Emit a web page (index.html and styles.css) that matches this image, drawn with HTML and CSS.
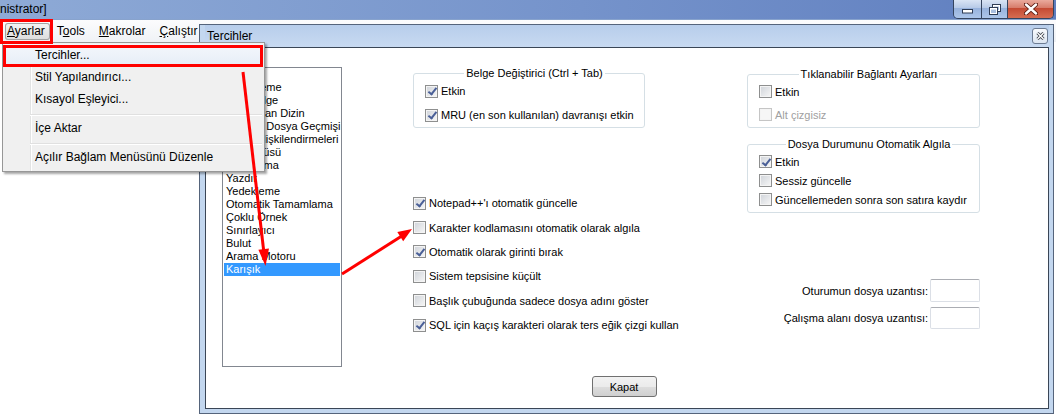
FILE: index.html
```html
<!DOCTYPE html>
<html lang="tr">
<head>
  <meta charset="UTF-8" />
  <title>Tercihler</title>
  <link rel="stylesheet" href="styles.css">
</head>
<body>
<div class="screen">

  <div class="main-win">
    <div class="titlebar">
      <span class="title">nistrator]</span>
      <div class="caption">
        <span class="cap cap-min">
          <svg width="11" height="5" viewBox="0 0 11 5"><rect x="0.5" y="0.5" width="10" height="3.5" fill="#fff" stroke="#2e3c55"/></svg>
        </span>
        <span class="cap cap-max">
          <svg width="12" height="11" viewBox="0 0 12 11"><rect x="3.5" y="0.5" width="8" height="7" fill="#fff" stroke="#2e3c55"/><rect x="5" y="2.5" width="5" height="3.5" fill="#a9bfe0"/><rect x="0.5" y="3.5" width="8" height="7" fill="#fff" stroke="#2e3c55"/><rect x="2" y="5.5" width="5" height="3.5" fill="#a9bfe0"/></svg>
        </span>
        <span class="cap cap-close">
          <svg width="14" height="12" viewBox="0 0 14 12"><path d="M2 1.5 L12 10.5 M12 1.5 L2 10.5" stroke="#5a1a10" stroke-width="4.2" stroke-linecap="round"/><path d="M2 1.5 L12 10.5 M12 1.5 L2 10.5" stroke="#fff" stroke-width="2.4" stroke-linecap="round"/></svg>
        </span>
      </div>
    </div>
    <div class="menubar">
      <span class="mi open"><u>A</u>yarlar</span>
      <span class="mi">T<u>o</u>ols</span>
      <span class="mi"><u>M</u>akrolar</span>
      <span class="mi"><u>Ç</u>alıştır</span>
    </div>
    <div class="client"></div>
  </div>

  <div class="dialog">
    <div class="dlg-title">
      <span>Tercihler</span>
      <span class="dlg-close">
        <svg width="9" height="8" viewBox="0 0 9 8"><path d="M1.5 1 L7.5 7 M7.5 1 L1.5 7" stroke="#3a3f48" stroke-width="3"/><path d="M1.5 1 L7.5 7 M7.5 1 L1.5 7" stroke="#fff" stroke-width="1.4"/></svg>
      </span>
    </div>
    <div class="dlg-body">
      <div class="panes">
        <ul class="listbox">
          <li>Genel</li>
          <li>Düzenleme</li>
          <li>Yeni Belge</li>
          <li>Varsayılan Dizin</li>
          <li>En Yeni Dosya Geçmişi</li>
          <li>Dosya İlişkilendirmeleri</li>
          <li>Dil Menüsü</li>
          <li>Vurgulama</li>
          <li>Yazdır</li>
          <li>Yedekleme</li>
          <li>Otomatik Tamamlama</li>
          <li>Çoklu Örnek</li>
          <li>Sınırlayıcı</li>
          <li>Bulut</li>
          <li>Arama Motoru</li>
          <li class="selected">Karışık</li>
        </ul>

        <div class="mid-col">
          <fieldset class="group group-tab">
            <legend>Belge Değiştirici (Ctrl + Tab)</legend>
            <div class="row"><span class="cb on"></span>Etkin</div>
            <div class="row"><span class="cb on"></span>MRU (en son kullanılan) davranışı etkin</div>
          </fieldset>

          <div class="options">
            <div class="row"><span class="cb on"></span>Notepad++'ı otomatik güncelle</div>
            <div class="row"><span class="cb"></span>Karakter kodlamasını otomatik olarak algıla</div>
            <div class="row"><span class="cb on"></span>Otomatik olarak girinti bırak</div>
            <div class="row"><span class="cb"></span>Sistem tepsisine küçült</div>
            <div class="row"><span class="cb"></span>Başlık çubuğunda sadece dosya adını göster</div>
            <div class="row"><span class="cb on"></span>SQL için kaçış karakteri olarak ters eğik çizgi kullan</div>
          </div>
        </div>

        <div class="right-col">
          <fieldset class="group group-link">
            <legend>Tıklanabilir Bağlantı Ayarları</legend>
            <div class="row"><span class="cb"></span>Etkin</div>
            <div class="row disabled"><span class="cb"></span>Alt çizgisiz</div>
          </fieldset>

          <fieldset class="group group-file">
            <legend>Dosya Durumunu Otomatik Algıla</legend>
            <div class="row"><span class="cb on"></span>Etkin</div>
            <div class="row"><span class="cb"></span>Sessiz güncelle</div>
            <div class="row"><span class="cb"></span>Güncellemeden sonra son satıra kaydır</div>
          </fieldset>

          <div class="field field-first">
            <span>Oturumun dosya uzantısı:</span>
            <span class="textbox"></span>
          </div>
          <div class="field field-second">
            <span>Çalışma alanı dosya uzantısı:</span>
            <span class="textbox"></span>
          </div>
        </div>
      </div>

      <div class="footer">
        <span class="button">Kapat</span>
      </div>
    </div>
  </div>

  <div class="dropdown">
    <div class="dd-item hover">Tercihler...</div>
    <div class="dd-item">Stil Yapılandırıcı...</div>
    <div class="dd-item">Kısayol Eşleyici...</div>
    <div class="dd-sep"></div>
    <div class="dd-item">İçe Aktar</div>
    <div class="dd-sep"></div>
    <div class="dd-item">Açılır Bağlam Menüsünü Düzenle</div>
  </div>

  <div class="mark mark-menu"></div>
  <div class="mark mark-item"></div>

  <svg class="arrows" width="1056" height="414" viewBox="0 0 1056 414">
    <line x1="243" y1="72" x2="263.6" y2="250" stroke="#ff0000" stroke-width="3"/>
    <polygon points="265.5,266 269,248.5 258.4,249.8" fill="#ff0000"/>
    <line x1="342" y1="274" x2="401" y2="236.5" stroke="#ff0000" stroke-width="3"/>
    <polygon points="412,229 403.2,241.2 397.3,232" fill="#ff0000"/>
  </svg>

</div>
</body>
</html>
```

FILE: styles.css
```css
body {
  margin: 0;
  font-family: "Liberation Sans", Arial, sans-serif;
  color: #000;
}
.screen {
  position: relative;
  width: 1056px;
  height: 414px;
  overflow: hidden;
  background: #fff;
}

/* main window */
.main-win {
  display: flex;
  flex-direction: column;
  height: 100%;
}
.titlebar {
  height: 20px;
  display: flex;
  justify-content: space-between;
  align-items: flex-start;
  background: linear-gradient(to right, #8eaad6, #7593cb 55%, #5f7ebf);
  border-bottom: 1px solid #88a3cd;
  box-sizing: border-box;
}
.title {
  font-size: 12px;
  line-height: 19px;
}
.caption {
  display: flex;
  height: 18px;
  margin-right: 2px;
  border: 1px solid #34445f;
  border-top: none;
  border-radius: 0 0 5px 5px;
  overflow: hidden;
}
.cap {
  display: flex;
  align-items: center;
  justify-content: center;
}
.cap-min, .cap-max {
  background: linear-gradient(#d9e4f4, #b6c9e7 45%, #97b2dc 46%, #adc6ea);
  border-right: 1px solid #34445f;
}
.cap-min {
  width: 28px;
  align-items: flex-end;
  padding-bottom: 4px;
  box-sizing: border-box;
}
.cap-max {
  width: 25px;
}
.cap-close {
  width: 45px;
  background: linear-gradient(#eaaa9d, #d67a68 45%, #c44a33 46%, #d66d52);
}
.menubar {
  height: 22px;
  display: flex;
  align-items: center;
  font-size: 12px;
  background: linear-gradient(#fcfcfd, #eff2f6);
}
.mi {
  padding: 0 7px;
  line-height: 17px;
}
.mi u {
  text-underline-offset: 1px;
}
.mi.open {
  margin-left: 5px;
  padding: 0 5px 0 2px;
  border-radius: 3px;
  background: linear-gradient(#f4f4f4, #dcdcdc);
  box-shadow: inset 0 0 0 1px #a3a3a3;
}
.client {
  flex: 1;
  background: #fff;
}

/* dialog window */
.dialog {
  position: absolute;
  left: 199px;
  top: 24px;
  width: 855px;
  height: 390px;
  box-sizing: border-box;
  border: 1px solid #55647b;
  padding: 0 4px 4px 5px;
  display: flex;
  flex-direction: column;
  background: #c3d7ef;
}
.dlg-title {
  height: 22px;
  flex: none;
  display: flex;
  align-items: center;
  justify-content: space-between;
  padding: 0 1px 0 2px;
  font-size: 12px;
  background: linear-gradient(#b7cdeb, #c8daf1);
}
.dlg-close {
  width: 16px;
  height: 16px;
  box-sizing: border-box;
  border: 1px solid #6d7c93;
  border-radius: 3px;
  background: linear-gradient(#f8fafd, #dde6f1);
  display: flex;
  align-items: center;
  justify-content: center;
}
.dlg-body {
  flex: 1;
  border: 1px solid #3a4656;
  background: #fff;
  padding-top: 19px;
  display: flex;
  flex-direction: column;
  font-size: 11px;
}
.panes {
  display: flex;
  height: 300px;
  padding-left: 16px;
}

.listbox {
  list-style: none;
  margin: 0;
  padding: 0 1px;
  width: 120px;
  height: 300px;
  box-sizing: border-box;
  border: 1px solid #828790;
  overflow: hidden;
}
.listbox li {
  line-height: 13px;
  padding-left: 2px;
  white-space: nowrap;
}
.listbox li.selected {
  background: #3399ff;
  color: #fff;
}

.mid-col {
  margin-left: 71px;
  width: 232px;
}
.right-col {
  margin-left: 102px;
  width: 233px;
}

/* group boxes */
.group {
  margin: 0;
  padding: 0 0 0 11px;
  border: 1px solid #d5dfe5;
  border-radius: 3px;
  min-width: 0;
}
.group legend {
  margin: 0 auto;
  padding: 0 2px;
  line-height: 12px;
}
.group-tab .row {
  height: 24px;
}
.group-link {
  margin-top: 1px;
  padding-bottom: 1px;
}
.group-link .row {
  height: 23px;
}
.group-file {
  margin-top: 10px;
  padding-top: 2px;
  padding-bottom: 3px;
}
.group-file .row {
  height: 19px;
}

.row {
  display: flex;
  align-items: center;
  white-space: nowrap;
}
.row.disabled {
  color: #a0a0a0;
}
.options {
  margin-top: 63px;
}
.options .row {
  height: 24.4px;
}

/* checkbox */
.cb {
  position: relative;
  flex: none;
  width: 13px;
  height: 13px;
  box-sizing: border-box;
  margin-right: 3px;
  border: 1px solid #8e8f8f;
  background: linear-gradient(135deg, #cfd3d9, #f7f7f7);
  box-shadow: inset 0 0 0 1px #f4f4f4;
}
.cb.on::after {
  content: "";
  position: absolute;
  left: 3.5px;
  top: 0.5px;
  width: 3px;
  height: 7px;
  border: solid #4a5f97;
  border-width: 0 2px 2px 0;
  transform: rotate(38deg);
}
.row.disabled .cb {
  border-color: #c5c5c5;
  background: #f6f6f6;
}

/* text fields */
.field {
  display: flex;
  align-items: center;
  justify-content: flex-end;
  gap: 2px;
}
.field-first {
  margin-top: 66px;
  height: 23px;
}
.field-second {
  margin-top: 5px;
  height: 22px;
}
.textbox {
  width: 50px;
  height: 100%;
  box-sizing: border-box;
  border: 1px solid #dbdfe6;
  border-top-color: #abadb3;
  border-radius: 2px;
  background: #fff;
}

.footer {
  display: flex;
  justify-content: center;
  margin-top: 9px;
  padding-right: 6px;
}
.button {
  width: 65px;
  height: 21px;
  box-sizing: border-box;
  border: 1px solid #707070;
  border-radius: 3px;
  background: linear-gradient(#f2f2f2, #ebebeb 50%, #dddddd 51%, #cfcfcf);
  display: flex;
  align-items: center;
  justify-content: center;
}

/* dropdown menu */
.dropdown {
  position: absolute;
  left: 2px;
  top: 42px;
  width: 263px;
  box-sizing: border-box;
  padding: 1px 2px 3px;
  border: 1px solid #979797;
  background: linear-gradient(to right, transparent 27px, #e2e3e3 27px, #e2e3e3 28px, #fff 28px, #fff 29px, transparent 29px), #f0f0f0;
  box-shadow: 2px 2px 2px rgba(0, 0, 0, 0.35);
  font-size: 12px;
}
.dd-item {
  height: 22px;
  line-height: 22px;
  padding-left: 30px;
  white-space: nowrap;
}
.dd-item.hover {
  background: linear-gradient(#f4f7fc, #e6edf7);
}
.dd-sep {
  height: 1px;
  margin: 4px 0 1px 25px;
  background: #e0e0e0;
  border-bottom: 1px solid #fff;
}

/* annotations */
.mark {
  position: absolute;
  box-sizing: border-box;
  border: 3px solid #ff0000;
}
.mark-menu {
  left: 0;
  top: 19px;
  width: 53px;
  height: 25px;
}
.mark-item {
  left: 3px;
  top: 45px;
  width: 260px;
  height: 22px;
}
.arrows {
  position: absolute;
  left: 0;
  top: 0;
  pointer-events: none;
}
```
